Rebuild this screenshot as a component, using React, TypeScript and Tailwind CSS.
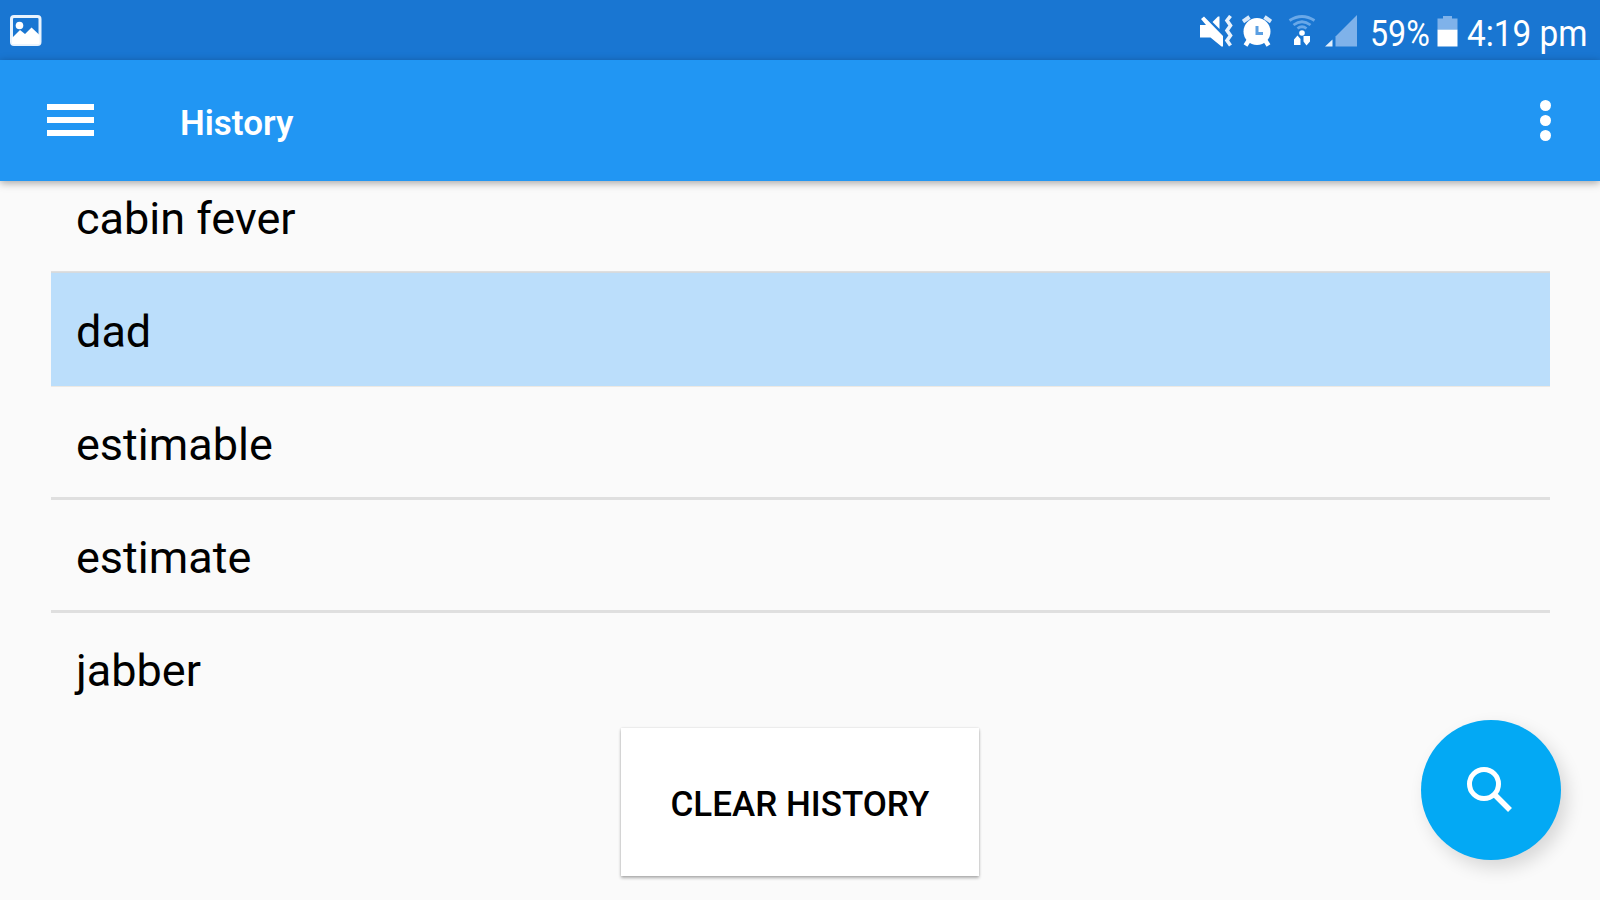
const entries = [
  { word: "cabin fever", selected: false },
  { word: "dad", selected: true },
  { word: "estimable", selected: false },
  { word: "estimate", selected: false },
  { word: "jabber", selected: false },
];

const PictureIcon = () => (
  <svg width="32" height="31" viewBox="0 0 32 31" fill="none">
    <rect x="1.500" y="1.500" width="28.500" height="28" rx="2.500" stroke="#e9f3fd" strokeWidth="3" />
    <circle cx="9.500" cy="10.500" r="3.800" fill="#fff" />
    <path d="M2 23l8-8 5 4 6.500-6.500 8 7.500v9H2z" fill="#fff" />
  </svg>
);

const VibrateIcon = () => (
  <svg width="33" height="32" viewBox="0 0 33 32" fill="none" className="shrink-0">
    <path d="M0 10h6L1 4l3-2.500L23 21v10.500h-1.500L10.500 22.500H0z" fill="#fff" />
    <path d="M12.500 7L18 1.500h1.500v12.500z" fill="#fff" />
    <path d="M30.500 1L27 5.500l3.500 5-3.500 5 3.500 5-3.500 5 3.500 5" stroke="#eaf3fc" strokeWidth="3.600" />
  </svg>
);

const AlarmIcon = () => (
  <svg width="30" height="32" viewBox="0 0 30 32" fill="none">
    <circle cx="15" cy="16.500" r="13.500" fill="#fff" />
    <path d="M1 6.500L7.500 2M29 6.500L22.500 2" stroke="#d9e9fa" strokeWidth="4" />
    <path d="M7 25l-3.500 5.500M23 25l3.500 5.500" stroke="#fff" strokeWidth="4.500" />
    <path d="M15 11v7.500h6" stroke="#5b9fe2" strokeWidth="3" />
  </svg>
);

const WifiIcon = () => (
  <svg width="28" height="32" viewBox="0 0 28 32" fill="none">
    <path d="M1.500 5.500Q14-2.500 26.500 5.500M5.500 10Q14 3.500 22.500 10M9.500 13.500Q14 10 18.500 13.500" stroke="#69a8e8" strokeWidth="2.800" />
    <circle cx="14" cy="18" r="2.800" fill="#fff" />
    <path d="M9.500 20.500l3 3.500v6H6v-5.500zM18.500 30.500l-3-4v-5.500h6.500v5.500z" fill="#fff" />
  </svg>
);

const SignalIcon = () => (
  <svg width="33" height="32" viewBox="0 0 33 32">
    <path d="M32 0v31.500H10.500V21.500z" fill="#7fb2ea" />
    <path d="M0 31.500l7.500-7v7z" fill="#e2effc" />
  </svg>
);

const BatteryIcon = () => (
  <svg width="21" height="32" viewBox="0 0 21 32">
    <path d="M6 1h9v2.500h5.500v11H.5v-11H6z" fill="#7fb2ea" />
    <path d="M.5 14.500h20v17H.5z" fill="#fff" />
  </svg>
);

const StatusBar = () => (
  <div className="flex h-[60px] items-start justify-between bg-[#1976d2] pt-[15px] pl-[10px] text-[37px] leading-[37px] text-white">
    <PictureIcon />
    <div className="flex w-[400px] items-start">
      <VibrateIcon />
      <span className="ml-[9px] shrink-0"><AlarmIcon /></span>
      <span className="ml-[16px] shrink-0"><WifiIcon /></span>
      <span className="ml-[9px] shrink-0"><SignalIcon /></span>
      <span className="ml-[12px] w-[67px] shrink-0 origin-left scale-x-[0.87] whitespace-nowrap">59%</span>
      <span className="shrink-0"><BatteryIcon /></span>
      <span className="ml-[9px] shrink-0 origin-left scale-x-[0.9] whitespace-nowrap">4:19 pm</span>
    </div>
  </div>
);

const AppBar = () => (
  <header className="relative z-10 flex h-[121px] items-center bg-[#2196f3] pr-[49px] pl-[47px] text-white shadow-[0_2px_8px_rgba(0,0,0,0.35)]">
    <button className="-mt-[2px] flex w-[47px] flex-col gap-[7px]">
      <span className="h-[6px] w-full bg-white" />
      <span className="h-[6px] w-full bg-white" />
      <span className="h-[6px] w-full bg-white" />
    </button>
    <h1 className="mt-[5px] ml-[86px] text-[35px] leading-none font-semibold">History</h1>
    <button className="ml-auto flex flex-col gap-[4px]">
      <span className="size-[11px] rounded-full bg-white" />
      <span className="size-[11px] rounded-full bg-white" />
      <span className="size-[11px] rounded-full bg-white" />
    </button>
  </header>
);

export default function App() {
  return (
    <div className="relative flex h-[900px] w-[1600px] flex-col overflow-hidden bg-[#fafafa] font-['Roboto',sans-serif] text-black">
      <StatusBar />
      <AppBar />

      {/* The list is scrolled, so the first row sits partly under the app bar */}
      <main className="flex h-[545px] flex-col justify-end overflow-hidden pr-[50px] pl-[51px]">
        <ul>
          {entries.map(({ word, selected }) => (
            <li
              key={word}
              className={`flex items-center pl-[25px] text-[45px] leading-none last:border-transparent ${
                selected
                  ? "-mt-[2px] h-[115px] border-t border-b border-t-[#d5dade] border-b-[#ece9e4] bg-[#bbdefb] pt-[4px]"
                  : "h-[113px] border-b-[3px] border-[#dfdfdf] pt-[5px]"
              }`}
            >
              {word}
            </li>
          ))}
        </ul>
      </main>

      <div className="flex justify-center pt-[2px]">
        <button className="h-[148px] w-[358px] bg-white pt-[6px] text-[35px] font-medium shadow-[0_2px_3px_rgba(0,0,0,0.3),0_0_2px_rgba(0,0,0,0.12)]">
          CLEAR HISTORY
        </button>
      </div>

      <button className="absolute top-[720px] left-[1421px] flex size-[140px] items-center justify-center rounded-full bg-[#03a9f4] shadow-[6px_8px_18px_rgba(0,0,0,0.14)]">
        <svg width="140" height="140" viewBox="0 0 140 140" fill="none" stroke="#fff" strokeWidth="5">
          <circle cx="63" cy="64" r="14.500" />
          <path d="M73 74l16 16" strokeWidth="5.500" />
        </svg>
      </button>
    </div>
  );
}
